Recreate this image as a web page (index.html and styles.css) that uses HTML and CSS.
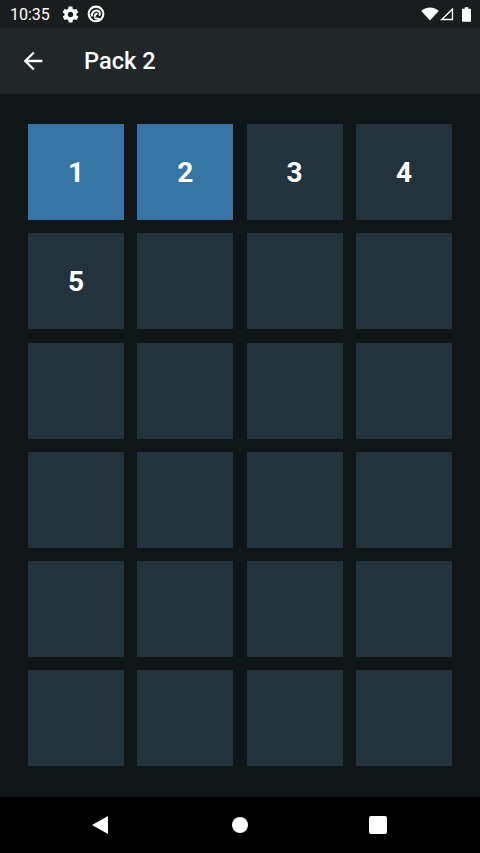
FILE: index.html
```html
<!DOCTYPE html>
<html lang="en">
<head>
<meta charset="UTF-8">
<title>Pack 2</title>
<link rel="stylesheet" href="styles.css">
</head>
<body>

<div class="screen">
  <div class="status-bar">
    <span class="clock">10:35</span>
    <svg class="gear-icon" viewBox="0 0 24 24"><path d="M19.4 13c0-.3.1-.6.1-1s0-.7-.1-1l2.1-1.6c.2-.2.2-.4.1-.6l-2-3.5c-.1-.2-.4-.3-.6-.2l-2.5 1c-.5-.4-1.1-.7-1.7-1l-.4-2.7c0-.2-.2-.4-.5-.4h-4c-.3 0-.5.2-.5.4l-.4 2.7c-.6.3-1.2.6-1.7 1l-2.5-1c-.2-.1-.5 0-.6.2l-2 3.5c-.1.2-.1.5.1.6L4.6 11c0 .3-.1.7-.1 1s0 .7.1 1l-2.1 1.6c-.2.2-.2.4-.1.6l2 3.5c.1.2.4.3.6.2l2.5-1c.5.4 1.1.7 1.7 1l.4 2.700c0 .2.2.4.5.4h4c.3 0 .5-.2.5-.4l.4-2.700c.6-.3 1.200-.6 1.700-1l2.500 1c.2.1.5 0 .6-.2l2-3.500c.1-.2.1-.5-.1-.6L19.400 13zM12 15.500c-1.900 0-3.500-1.600-3.500-3.500s1.600-3.500 3.500-3.500 3.500 1.600 3.500 3.500-1.600 3.500-3.500 3.500z"/></svg>
    <svg class="sync-icon" viewBox="0 0 24 24"><circle class="ring" cx="12" cy="12" r="8.800"/><path class="ring" d="M6.800 15c-.6-4.500 3.600-8.200 7.200-7 2.800.9 3.300 4 1.800 6"/><path class="ring" d="M10.500 15.500c-.5-2.500 1.500-4.200 3.200-3.500"/><path class="ring" d="M10 16.800l7.500 1.700"/></svg>
    <span class="status-spacer"></span>
    <svg class="wifi-icon" viewBox="0 0 20 16"><path d="M0 4.500C2.700 2 6.200.6 10 .6s7.300 1.400 10 3.900L10 15.500z"/></svg>
    <svg class="signal-icon" viewBox="0 0 16 16"><path fill-rule="evenodd" d="M0 15L15 .5V15zM4 13.500h9.500V4.200z"/></svg>
    <svg class="battery-icon" viewBox="0 0 10 16"><path d="M3 0h4v1.500h2.200c.4 0 .8.400.8.800V15.200c0 .4-.4.800-.8.800H.8c-.4 0-.8-.4-.8-.8V2.300c0-.4.400-.8.800-.8H3z"/></svg>
  </div>

  <div class="app-bar">
    <svg class="back-arrow" viewBox="0 0 24 24"><path d="M20 11H7.830l5.590-5.590L12 4l-8 8 8 8 1.410-1.410L7.830 13H20z"/></svg>
    <h1 class="app-title">Pack 2</h1>
  </div>

  <div class="level-grid">
    <div class="level done">1</div>
    <div class="level done">2</div>
    <div class="level">3</div>
    <div class="level">4</div>
    <div class="level">5</div>
    <div class="level"></div>
    <div class="level"></div>
    <div class="level"></div>
    <div class="level"></div>
    <div class="level"></div>
    <div class="level"></div>
    <div class="level"></div>
    <div class="level"></div>
    <div class="level"></div>
    <div class="level"></div>
    <div class="level"></div>
    <div class="level"></div>
    <div class="level"></div>
    <div class="level"></div>
    <div class="level"></div>
    <div class="level"></div>
    <div class="level"></div>
    <div class="level"></div>
    <div class="level"></div>
  </div>

  <div class="nav-bar">
    <svg class="nav-back" viewBox="0 0 16 18"><path d="M16 0v18L0 9z"/></svg>
    <svg class="nav-home" viewBox="0 0 16 16"><circle cx="8" cy="8" r="8"/></svg>
    <svg class="nav-recent" viewBox="0 0 18 18"><rect width="18" height="18" rx="2"/></svg>
  </div>
</div>

</body>
</html>
```

FILE: styles.css
```css
* {
  box-sizing: border-box;
  padding: 0px;
  margin: 0px;
}

body {
  background-color: #101618;
  font-family: Roboto, "Liberation Sans", sans-serif;
}

svg {
  fill: #ffffff;
  display: block;
}

.screen {
  width: 480px;
  height: 853px;
  display: flex;
  flex-direction: column;
  overflow: hidden;
}

.status-bar {
  height: 28px;
  display: flex;
  align-items: center;
  padding: 0px 9px 0px 10px;
  background-color: #1a1d1e;
  color: #ffffff;
}

.clock {
  font-size: 16px;
  margin-right: 11px;
}

.gear-icon {
  width: 19px;
  height: 19px;
  margin-right: 6px;
}

.sync-icon {
  width: 20px;
  height: 20px;
}

.ring {
  fill: none;
  stroke: #ffffff;
  stroke-width: 2.500;
}

.status-spacer {
  flex: 1;
}

.wifi-icon {
  width: 18px;
  height: 14px;
  margin-right: 1px;
}

.signal-icon {
  width: 14px;
  height: 14px;
  margin-right: 8px;
}

.battery-icon {
  width: 9px;
  height: 15px;
}

.app-bar {
  height: 66px;
  display: flex;
  align-items: center;
  padding-left: 19px;
  background-color: #212628;
}

.back-arrow {
  width: 28px;
  height: 28px;
  margin-right: 37px;
}

.app-title {
  font-size: 23.700px;
  font-weight: 500;
  color: #ffffff;
}

.level-grid {
  flex: 1;
  display: grid;
  grid-template-columns: repeat(4, 96px);
  grid-auto-rows: 96px;
  gap: 13.250px 13.330px;
  padding: 30px 28px 0px;
}

.level {
  display: flex;
  justify-content: center;
  align-items: center;
  background-color: #23333e;
  color: #ffffff;
  font-size: 28px;
  font-weight: 700;
}

.done {
  background-color: #3674a4;
}

.nav-bar {
  height: 56px;
  display: flex;
  align-items: center;
  padding-left: 92px;
  background-color: #000000;
}

.nav-back {
  width: 16px;
  height: 18px;
}

.nav-home {
  width: 16px;
  height: 16px;
  margin: 0px 121px 0px 124px;
}

.nav-recent {
  width: 18px;
  height: 18px;
}
```
